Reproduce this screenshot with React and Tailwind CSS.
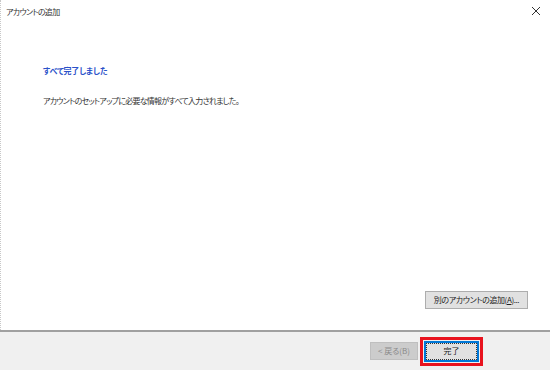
import React from 'react';

const font = "font-['Yu_Gothic_UI','Noto_Sans_CJK_JP',sans-serif]";

function App() {
  return (
    <div className={`w-[550px] h-[370px] flex flex-col bg-white text-[#222] ${font} [font-feature-settings:'palt'] overflow-hidden`}>
      <div className="flex-1 flex flex-col border-l border-dotted border-[#c8c8c8]">
        <div className="h-[24px] flex items-center justify-between pl-[5px] pr-[8px]">
          <span className="text-[8px] leading-none tracking-[-0.7px] text-[#333]">アカウントの追加</span>
          <svg width="10" height="10" viewBox="0 0 10 10" className="mb-[2px] mr-[1px]">
            <path d="M1 1 L9 9 M9 1 L1 9" stroke="#333" strokeWidth="1" />
          </svg>
        </div>

        <div className="pl-[42px] pt-[43px]">
          <h1 className="text-[8px] leading-none font-bold tracking-[-0.2px] text-[#2b52c9]">すべて完了しました</h1>
          <p className="mt-[22px] text-[8px] leading-none tracking-[-0.75px] text-[#333]">
            アカウントのセットアップに必要な情報がすべて入力されました。
          </p>
        </div>

        <div className="flex-1 flex items-end justify-end pr-[22px] pb-[21px]">
          <button
            type="button"
            className="w-[103px] h-[18px] flex items-center justify-center bg-[#e1e1e1] border border-[#adadad] text-[8px] leading-none tracking-[-0.4px] text-[#222]"
          >
            別のアカウントの追加(<span className="underline">A</span>)...
          </button>
        </div>
      </div>

      <div className="h-[40px] border-t-2 border-[#a0a0a0] bg-[#f0f0f0] flex items-center justify-end pr-[67px] gap-[2px]">
        <button
          type="button"
          className="w-[48px] h-[18px] flex items-center justify-center bg-[#cccccc] border border-[#bfbfbf] text-[8px] leading-none text-[#8a8a8a]"
        >
          &lt; 戻る(B)
        </button>
        <div className="border-[3px] border-[#e8131e] p-[1px]">
          <button
            type="button"
            className="w-[55px] h-[21px] flex items-center justify-center bg-[#e1e1e1] border-2 border-[#0078d7] text-[8px] leading-none text-[#222]"
          >
            <span className="w-full h-full flex items-center justify-center border border-dotted border-[#333]">完了</span>
          </button>
        </div>
      </div>
    </div>
  );
}

export default App;
